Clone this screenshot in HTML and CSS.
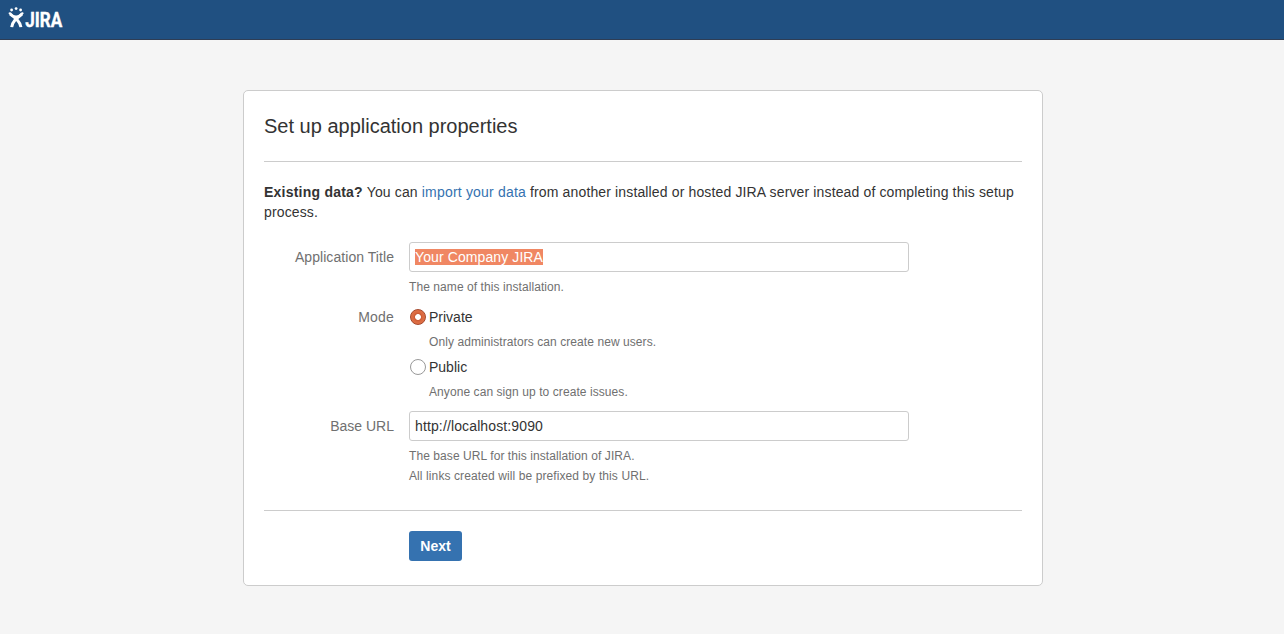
FILE: index.html
```html
<!DOCTYPE html>
<html lang="en">
<head>
<meta charset="utf-8">
<title>JIRA - Set up application properties</title>
<link rel="stylesheet" href="styles.css">
</head>
<body>
<header class="header">
  <svg class="logo" width="60" height="28" viewBox="0 0 60 28" role="img" aria-label="JIRA">
    <g fill="#fff">
      <circle cx="3.6" cy="4" r="1.4"/>
      <circle cx="8.1" cy="2.6" r="1.4"/>
      <circle cx="12.6" cy="4" r="1.4"/>
    </g>
    <g fill="none" stroke="#fff">
      <path stroke-width="2.2" d="M1.3 6.500C3 9.600 5.400 10.600 8.100 10.600S13.200 9.600 14.900 6.500"/>
      <path stroke-width="3" d="M14 8C9 12 4.300 15.400 3.700 21.200M2.200 8C8 12.500 12.300 15.600 12.900 21.200"/>
    </g>
    <text class="logo-text" x="17.3" y="20.600" textLength="37" lengthAdjust="spacingAndGlyphs">JIRA</text>
  </svg>
</header>
<main class="page">
  <form class="card">
    <h1 class="title">Set up application properties</h1>
    <p class="intro"><strong class="lead">Existing data?</strong> You can <a class="link" href="#">import your data</a> from another installed or hosted JIRA server instead of completing this setup process.</p>
    <div class="field">
      <label class="label label-title" for="app-title">Application Title</label>
      <div class="control">
        <div class="input" id="app-title"><span class="selected">Your Company JIRA</span></div>
        <div class="hint">The name of this installation.</div>
      </div>
    </div>
    <div class="field">
      <span class="label label-mode">Mode</span>
      <div class="control">
        <div class="option"><span class="radio radio-on"></span>Private</div>
        <div class="hint hint-option">Only administrators can create new users.</div>
        <div class="option"><span class="radio"></span>Public</div>
        <div class="hint hint-option">Anyone can sign up to create issues.</div>
      </div>
    </div>
    <div class="field field-url">
      <label class="label" for="base-url">Base URL</label>
      <div class="control">
        <div class="input" id="base-url">http://localhost:9090</div>
        <div class="hint">The base URL for this installation of JIRA.<br><span class="hint-wide">All links created will be prefixed by this URL.</span></div>
      </div>
    </div>
    <div class="actions"><button class="button" type="button">Next</button></div>
  </form>
</main>
</body>
</html>
```
FILE: styles.css
```css
* { box-sizing: border-box; }
body {
  margin: 0;
  background: #f5f5f5;
  color: #333;
  font: 14px/20px "Liberation Sans", Arial, sans-serif;
}
.header {
  height: 40px;
  padding: 6px 8px;
  background: #205081;
  border-bottom: 1px solid #2e3d54;
}
.logo { display: block; }
.logo-text {
  fill: #fff;
  stroke: #fff;
  stroke-width: 0.4px;
  font: bold 20px Roboto, sans-serif;
}
.page {
  display: flex;
  justify-content: center;
  padding: 50px 0 48px 2px;
}
.card {
  width: 800px;
  height: 496px;
  padding: 20px;
  background: #fff;
  border: 1px solid #ccc;
  border-radius: 5px;
}
.title {
  height: 51px;
  margin: 0 0 20px;
  border-bottom: 1px solid #ccc;
  font-size: 20px;
  font-weight: normal;
  line-height: 30px;
}
.intro {
  margin: 0 0 20px;
  letter-spacing: 0.14px;
}
.lead { letter-spacing: 0.23px; }
.link {
  color: #3572b0;
  letter-spacing: 0.19px;
  text-decoration: none;
}
.field {
  display: flex;
  gap: 15px;
  margin-bottom: 10px;
}
.field-url { margin-top: -1px; }
.label {
  width: 130px;
  padding-top: 5px;
  color: #707070;
  text-align: right;
}
.label-title { letter-spacing: 0.06px; }
.label-mode {
  padding-top: 0;
  letter-spacing: 0.2px;
}
.input {
  width: 500px;
  height: 30px;
  padding: 4px 5px;
  border: 1px solid #ccc;
  border-radius: 3px;
  background: #fff;
  letter-spacing: 0.13px;
}
.selected {
  background: #f08763;
  color: #fff;
  letter-spacing: 0.1px;
}
.hint {
  margin-top: 5px;
  color: #707070;
  font-size: 12px;
  letter-spacing: 0.075px;
}
.hint-wide { letter-spacing: 0.1px; }
.hint-option { padding-left: 20px; }
.option {
  display: flex;
  align-items: center;
  gap: 3px;
  padding-left: 1px;
}
.hint + .option { margin-top: 5px; }
.radio {
  width: 16px;
  height: 16px;
  border: 1px solid #999;
  border-radius: 50%;
  background: #fff;
}
.radio-on {
  border-color: #a5482c;
  background: radial-gradient(circle, #fff 0 2.5px, #c95a34 3.3px, #d9683f 4.5px, #e07046 7px);
}
.actions {
  margin-top: 24px;
  padding: 20px 0 0 145px;
  border-top: 1px solid #ccc;
}
.button {
  display: block;
  width: 53px;
  height: 30px;
  padding: 0;
  border: 0;
  border-radius: 3px;
  background: #3572b0;
  color: #fff;
  font: bold 14px/30px "Liberation Sans", Arial, sans-serif;
}
```
